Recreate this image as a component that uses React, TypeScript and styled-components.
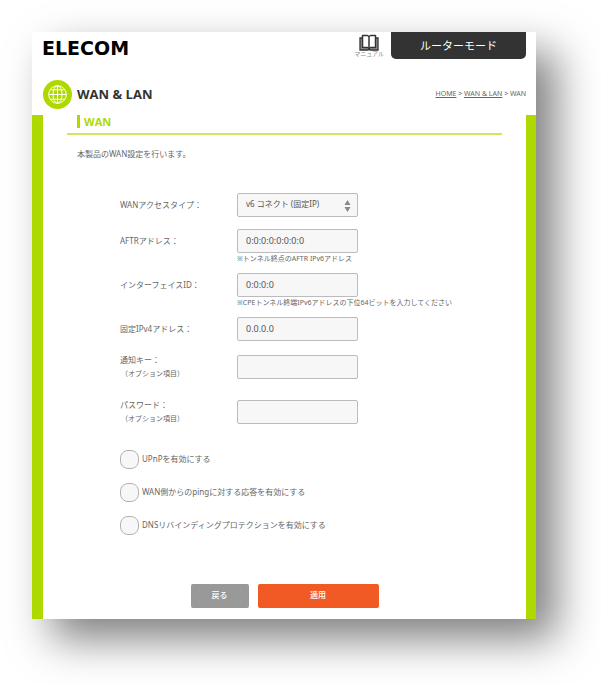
import React from "react";
import styled, { createGlobalStyle } from "styled-components";

const GlobalStyle = createGlobalStyle`
  * { box-sizing: border-box; }
  body {
    margin: 0;
    background: #fff;
    color: #666;
    font: 8px/14px "Noto Sans", "Noto Sans CJK JP", sans-serif;
  }
  h1, h2, p { margin: 0; }
  button, input, select { font: inherit; color: inherit; }
`;

const Page = styled.div`
  padding: 32px 65px 65px 32px;
`;

const Card = styled.main`
  background: #fff;
  box-shadow: 20px 20px 40px rgba(0, 0, 0, 0.5);
`;

const Header = styled.header`
  display: flex;
  align-items: flex-start;
  padding: 0 10px;
  height: 47px;
`;

const Logo = styled.div`
  flex: 1;
  color: #000;
  font: bold 19px/32px "DejaVu Sans", sans-serif;
`;

const Manual = styled.a`
  display: flex;
  flex-direction: column;
  align-items: center;
  margin-right: 7px;
  padding-top: 2px;
  color: #888;
  font-size: 6px;
  line-height: 7px;
  text-decoration: none;
`;

const Mode = styled.div`
  width: 135px;
  border-radius: 0 0 5px 5px;
  background: #333;
  color: #fff;
  font-size: 11px;
  line-height: 27px;
  text-align: center;
`;

const TitleBar = styled.div`
  display: flex;
  align-items: center;
  gap: 5px;
  height: 30px;
  padding: 0 10px 0 11px;
`;

const Title = styled.h1`
  flex: 1;
  color: #333;
  font: bold 13px/16px "Open Sans", sans-serif;
`;

const Crumbs = styled.nav`
  font-size: 7px;
  a { color: inherit; }
`;

const Panel = styled.section`
  margin-top: 6px;
  padding: 0 24px 11px;
  border: solid #aed900;
  border-width: 0 10px 0 11px;
`;

const SectionHead = styled.div`
  padding: 0 10px 5px;
  border-bottom: 2px solid #cbe860;
`;

const SectionTitle = styled.h2`
  padding-left: 4px;
  border-left: 3px solid #aed900;
  color: #aed900;
  font: bold 11px/13px "Open Sans", sans-serif;
`;

const Intro = styled.p`
  padding: 12px 10px 0;
`;

const Form = styled.form`
  padding: 32px 0 0 53px;
`;

const Fields = styled.div`
  display: grid;
  gap: 12px;
`;

const Row = styled.div<{ $optional?: boolean }>`
  display: grid;
  grid-template-columns: 117px 1fr;
  align-items: ${(p) => (p.$optional ? "center" : "start")};
  padding-bottom: ${(p) => (p.$optional ? 5 : 0)}px;
`;

const Label = styled.label<{ $optional?: boolean }>`
  line-height: ${(p) => (p.$optional ? 14 : 24)}px;
`;

const Sub = styled.small`
  display: block;
  padding-left: 1px;
  font-size: 7px;
`;

const Note = styled.p`
  margin-bottom: -4px;
  font-size: 7px;
  line-height: 12px;
  white-space: nowrap;
`;

const Input = styled.input`
  display: block;
  width: 121px;
  height: 24px;
  padding: 0 8px 2px;
  border: 1px solid #bbb;
  border-radius: 2px;
  background: #f7f7f7;
  color: #555;
  font-size: 9px;
`;

const SelectBox = styled.div`
  position: relative;
  width: 121px;
`;

const Select = styled.select`
  display: block;
  appearance: none;
  width: 100%;
  height: 24px;
  padding: 0 8px 2px;
  border: 1px solid #bbb;
  border-radius: 2px;
  background: #f7f7f7;
  color: #555;
`;

const Arrows = styled.svg`
  position: absolute;
  right: 7px;
  top: 7px;
  pointer-events: none;
`;

const Checks = styled.div`
  display: grid;
  gap: 14px;
  margin-top: 19px;
`;

const Check = styled.label`
  display: flex;
  align-items: center;
  gap: 3px;
  line-height: 19px;
  span { padding-bottom: 2px; line-height: 14px; }
`;

const Box = styled.input`
  appearance: none;
  width: 19px;
  height: 19px;
  margin: 0;
  border: 1px solid #b3b3b3;
  border-radius: 8px;
  background: #f7f7f7;
`;

const Actions = styled.div`
  display: flex;
  justify-content: center;
  gap: 9px;
  margin: 49px 53px 0 0;
`;

const Button = styled.button<{ $primary?: boolean }>`
  width: ${(p) => (p.$primary ? 121 : 58)}px;
  height: 24px;
  padding: 0 0 2px;
  border: 0;
  border-radius: 2px;
  background: ${(p) => (p.$primary ? "#f15a24" : "#999")};
  color: #fff;
  font-weight: 500;
`;

const BookIcon = () => (
  <svg width="20" height="17" viewBox="0 0 20 17" fill="none" aria-hidden="true">
    <path d="M1 4h18v12h-8l-1-1-1 1H1z" fill="#999" stroke="#333" strokeWidth="1.3" />
    <path
      d="M3.500 1.500h5L10 2.500l1.500-1H16.500V13.500h-5L10 14.500l-1.500-1h-5z"
      fill="#fff"
      stroke="#333"
      strokeWidth="1.500"
      strokeLinejoin="round"
    />
    <path d="M10 2.500v12" stroke="#333" strokeWidth="1.500" />
  </svg>
);

const GlobeIcon = () => (
  <svg width="29" height="29" viewBox="0 0 29 29" aria-hidden="true">
    <circle cx="14.500" cy="14.500" r="14.500" fill="#aed900" />
    <g fill="none" stroke="#fff" strokeWidth="1">
      <circle cx="14.500" cy="14.500" r="8.800" />
      <ellipse cx="14.500" cy="14.500" rx="4.500" ry="8.800" />
      <path d="M14.500 5.700v17.600M5.700 14.500h17.600M7.500 9.800h14M7.500 19.200h14" />
    </g>
  </svg>
);

export default function App() {
  return (
    <Page>
      <GlobalStyle />
      <Card>
        <Header>
          <Logo>ELECOM</Logo>
          <Manual href="#manual">
            <BookIcon />
            マニュアル
          </Manual>
          <Mode>ルーターモード</Mode>
        </Header>
        <TitleBar>
          <GlobeIcon />
          <Title>WAN &amp; LAN</Title>
          <Crumbs>
            <a href="#home">HOME</a> &gt; <a href="#wan-lan">WAN &amp; LAN</a> &gt; WAN
          </Crumbs>
        </TitleBar>
        <Panel>
          <SectionHead>
            <SectionTitle>WAN</SectionTitle>
          </SectionHead>
          <Intro>本製品のWAN設定を行います。</Intro>
          <Form onSubmit={(e) => e.preventDefault()}>
            <Fields>
              <Row>
                <Label htmlFor="access">WANアクセスタイプ：</Label>
                <SelectBox>
                  <Select id="access">
                    <option>v6 コネクト (固定IP)</option>
                  </Select>
                  <Arrows width="7" height="12" viewBox="0 0 7 12" fill="#888" aria-hidden="true">
                    <path d="M3.500 0 6.500 5h-6zM3.500 12 .5 7h6z" />
                  </Arrows>
                </SelectBox>
              </Row>
              <Row>
                <Label htmlFor="aftr">AFTRアドレス：</Label>
                <div>
                  <Input id="aftr" defaultValue="0:0:0:0:0:0:0:0" />
                  <Note>※トンネル終点のAFTR IPv6アドレス</Note>
                </div>
              </Row>
              <Row>
                <Label htmlFor="interface">インターフェイスID：</Label>
                <div>
                  <Input id="interface" defaultValue="0:0:0:0" />
                  <Note>※CPEトンネル終端IPv6アドレスの下位64ビットを入力してください</Note>
                </div>
              </Row>
              <Row>
                <Label htmlFor="ipv4">固定IPv4アドレス：</Label>
                <Input id="ipv4" defaultValue="0.0.0.0" />
              </Row>
              <Row $optional>
                <Label $optional htmlFor="key">
                  通知キー：
                  <Sub>（オプション項目）</Sub>
                </Label>
                <Input id="key" />
              </Row>
              <Row $optional>
                <Label $optional htmlFor="password">
                  パスワード：
                  <Sub>（オプション項目）</Sub>
                </Label>
                <Input id="password" type="password" />
              </Row>
            </Fields>
            <Checks>
              <Check>
                <Box type="checkbox" />
                <span>UPnPを有効にする</span>
              </Check>
              <Check>
                <Box type="checkbox" />
                <span>WAN側からのpingに対する応答を有効にする</span>
              </Check>
              <Check>
                <Box type="checkbox" />
                <span>DNSリバインディングプロテクションを有効にする</span>
              </Check>
            </Checks>
            <Actions>
              <Button type="button">戻る</Button>
              <Button type="submit" $primary>適用</Button>
            </Actions>
          </Form>
        </Panel>
      </Card>
    </Page>
  );
}
